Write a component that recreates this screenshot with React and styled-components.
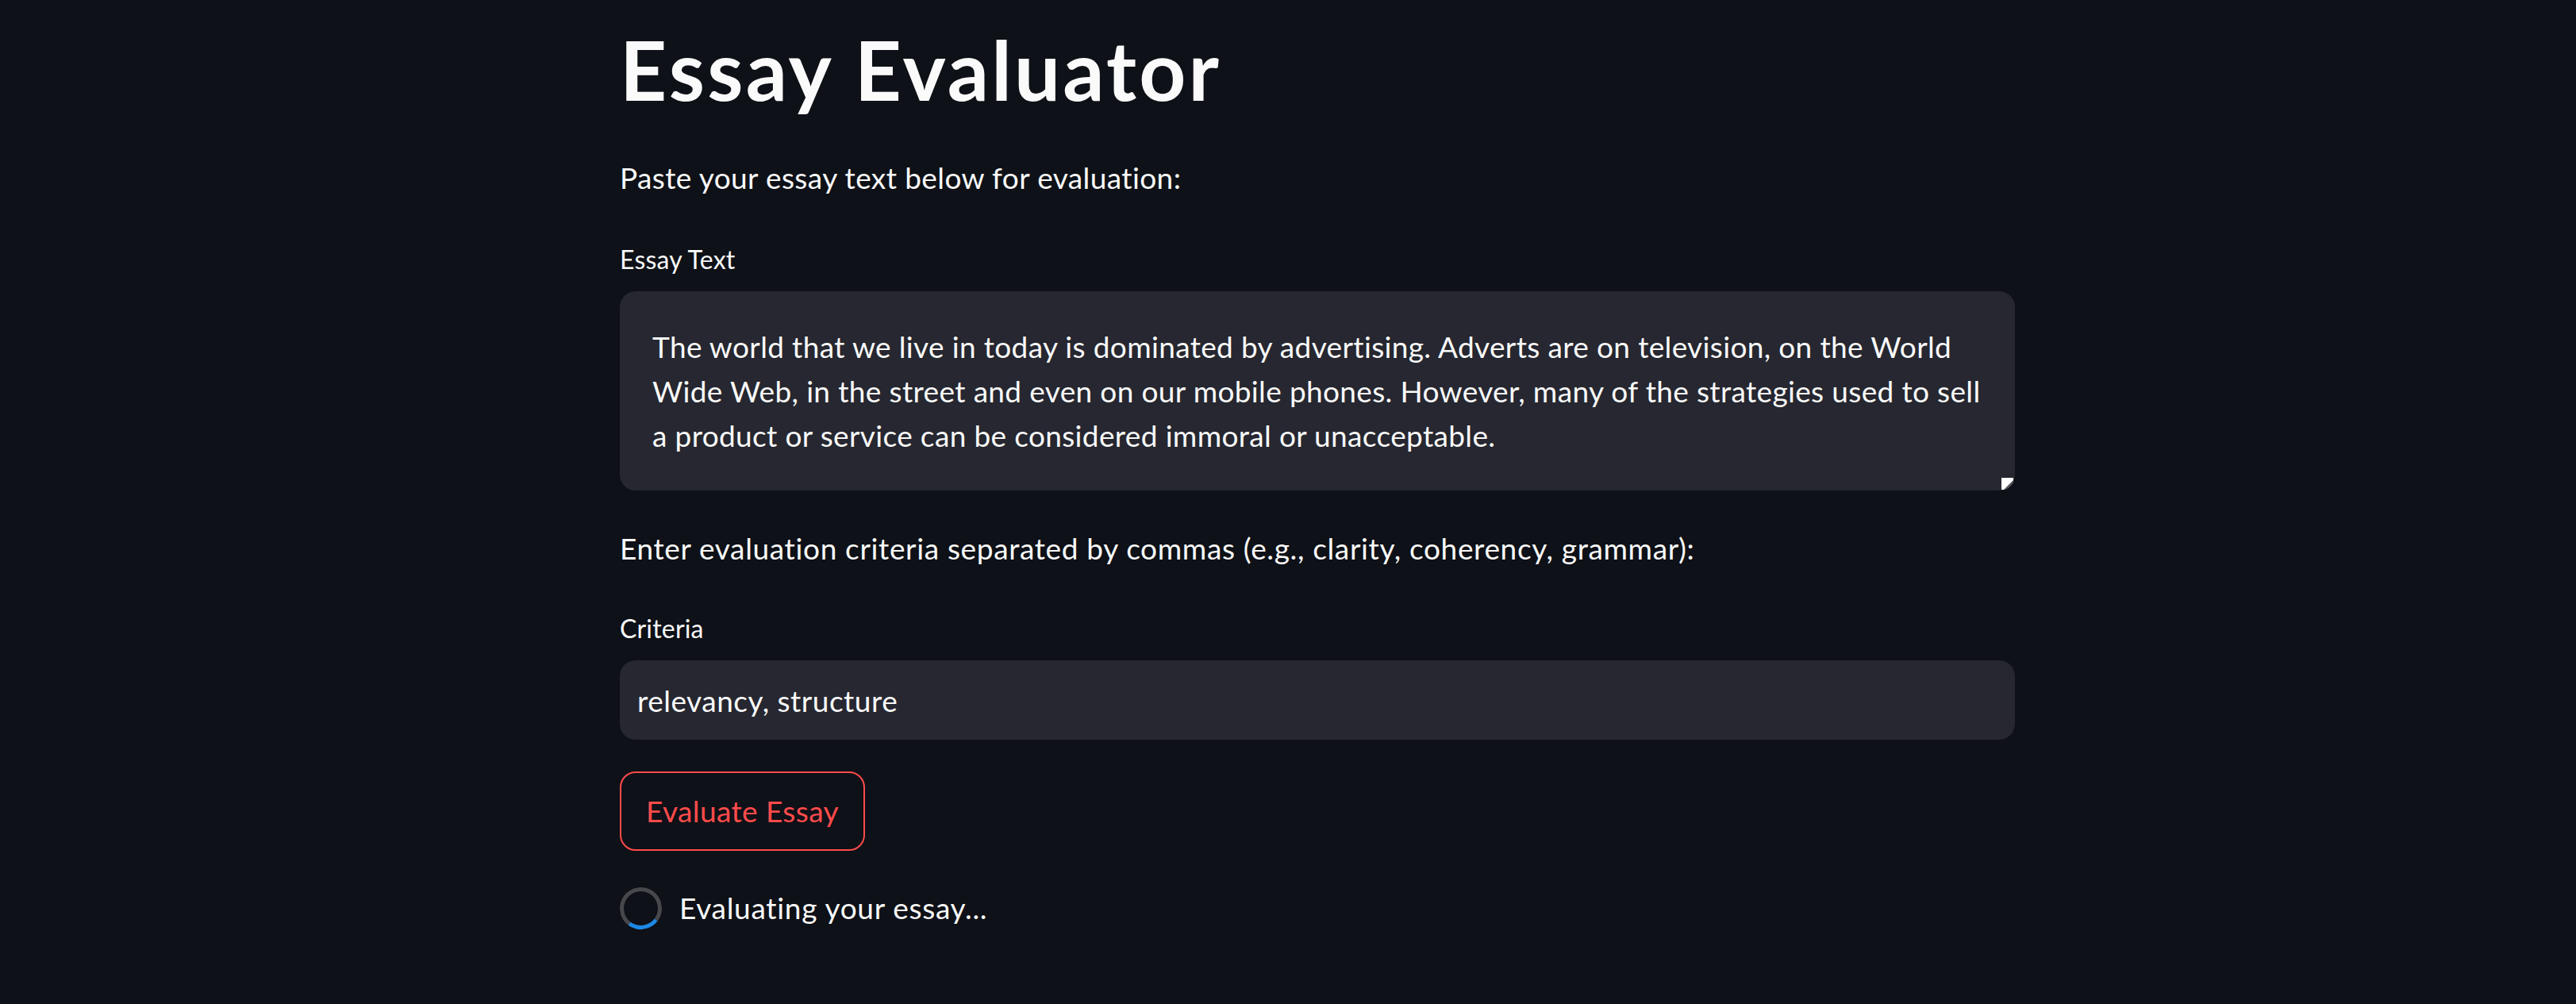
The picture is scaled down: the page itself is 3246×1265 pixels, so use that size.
import React from "react";
import styled, { createGlobalStyle } from "styled-components";

const GlobalStyle = createGlobalStyle`
  html, body {
    margin: 0;
    padding: 0;
    background: #0e1117;
  }
  body {
    font-family: Lato, "Noto Sans", sans-serif;
    color: #fafafa;
  }
`;

const Page = styled.div`
  min-height: 1265px;
  background: #0e1117;
  padding: 25px 0 0 781px;
  box-sizing: border-box;
`;

const Main = styled.main`
  width: 1758px;
  display: flex;
  flex-direction: column;
`;

const Title = styled.h1`
  margin: 0;
  font-family: Lato, "Noto Sans", sans-serif;
  font-weight: 700;
  font-size: 103px;
  line-height: 124px;
  letter-spacing: 3.2px;
  color: #fafafa;
`;

const Paragraph = styled.p`
  margin: ${(p) => p.$top}px 0 0 0;
  font-size: 37px;
  line-height: 56px;
  letter-spacing: ${(p) => p.$ls || 0.5}px;
  color: #fafafa;
`;

const Label = styled.label`
  display: block;
  margin: ${(p) => p.$top}px 0 18px 0;
  font-size: 32px;
  line-height: 44px;
  letter-spacing: 0.2px;
  color: #fafafa;
`;

const AreaWrap = styled.div`
  position: relative;
  height: 251px;
  border-radius: 20px;
  overflow: hidden;
  background: #262730;
`;

const TextArea = styled.textarea`
  display: block;
  width: 100%;
  height: 100%;
  box-sizing: border-box;
  margin: 0;
  border: none;
  outline: none;
  resize: none;
  background: transparent;
  color: #fafafa;
  font-family: Lato, "Noto Sans", sans-serif;
  font-size: 37px;
  line-height: 56px;
  letter-spacing: 0.35px;
  padding: 42px 40px 0 41px;
  overflow: hidden;
`;

const Grip = styled.svg`
  position: absolute;
  right: 2px;
  bottom: 1px;
  width: 15px;
  height: 15px;
`;

const Input = styled.input`
  display: block;
  width: 100%;
  height: 100px;
  box-sizing: border-box;
  margin: 0;
  border: none;
  outline: none;
  border-radius: 20px;
  background: #262730;
  color: #fafafa;
  font-family: Lato, "Noto Sans", sans-serif;
  font-size: 37px;
  line-height: 56px;
  letter-spacing: 0.5px;
  padding: 22px 22px;
`;

const Button = styled.button`
  align-self: flex-start;
  margin-top: 40px;
  height: 100px;
  box-sizing: border-box;
  padding: 0 31px;
  border: 2.5px solid #ff4b4b;
  border-radius: 20px;
  background: #0e1117;
  color: #ff4b4b;
  font-family: Lato, "Noto Sans", sans-serif;
  font-size: 37px;
  line-height: 56px;
  letter-spacing: 0.4px;
  cursor: pointer;
`;

const SpinnerRow = styled.div`
  margin-top: 45px;
  display: flex;
  align-items: center;
  gap: 22px;
  height: 54px;
`;

const Spinner = styled.div`
  width: 53px;
  height: 53px;
  box-sizing: border-box;
  border-radius: 50%;
  border: 5px solid #47484c;
  border-bottom-color: #1e88e5;
  transform: rotate(-8deg);
  flex: none;
`;

const SpinnerText = styled.span`
  font-size: 37px;
  line-height: 56px;
  letter-spacing: 0.7px;
  color: #fafafa;
`;

const essay =
  "The world that we live in today is dominated by advertising. Adverts are on television, on the World Wide Web, in the street and even on our mobile phones. However, many of the strategies used to sell a product or service can be considered immoral or unacceptable.";

export default function App() {
  return (
    <>
      <GlobalStyle />
      <Page>
        <Main>
          <Title>Essay Evaluator</Title>
          <Paragraph $top={47} $ls={0.4}>Paste your essay text below for evaluation:</Paragraph>
          <Label $top={53} htmlFor="essay">Essay Text</Label>
          <AreaWrap>
            <TextArea id="essay" defaultValue={essay} />
            <Grip viewBox="0 0 15 15">
              <rect x="0" y="0" width="15" height="15" fill="#ffffff" />
              <polygon points="15,3 15,15 3,15" fill="#4a4b52" />
            </Grip>
          </AreaWrap>
          <Paragraph $top={45} $ls={0.65}>
            Enter evaluation criteria separated by commas (e.g., clarity, coherency, grammar):
          </Paragraph>
          <Label $top={51} htmlFor="criteria">Criteria</Label>
          <Input id="criteria" defaultValue="relevancy, structure" />
          <Button>Evaluate Essay</Button>
          <SpinnerRow>
            <Spinner />
            <SpinnerText>Evaluating your essay...</SpinnerText>
          </SpinnerRow>
        </Main>
      </Page>
    </>
  );
}
